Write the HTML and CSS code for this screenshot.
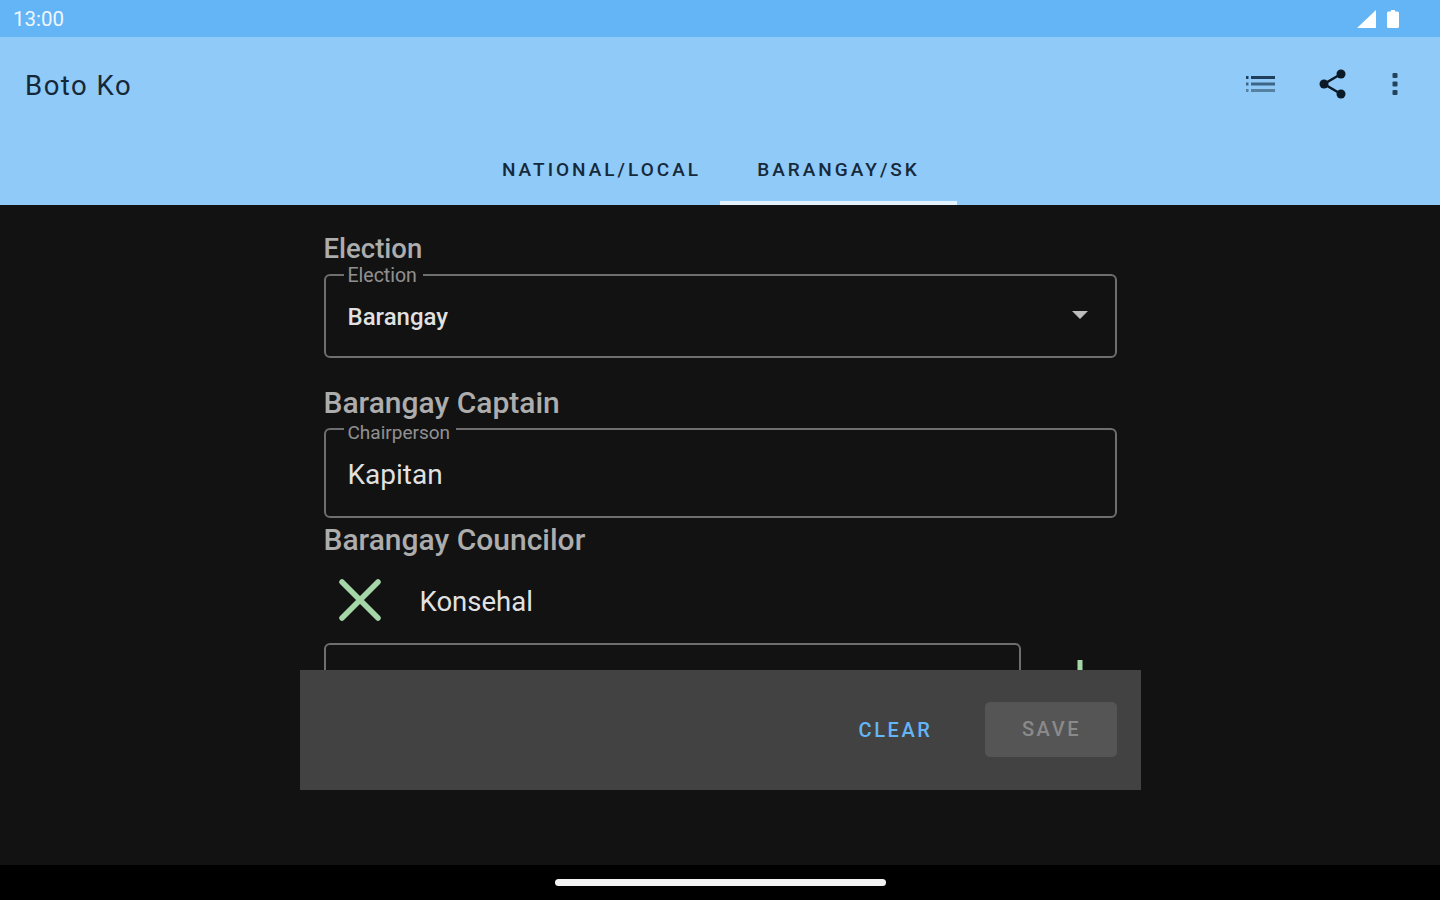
FILE: index.html
```html
<!DOCTYPE html>
<html lang="en">
<head>
    <meta charset="UTF-8">
    <meta name="viewport" content="width=device-width, initial-scale=1.0">
    <title>Boto Ko</title>
    <link rel="stylesheet" href="styles.css">
</head>
<body>
    <div class="screen">
        <div class="status-bar">
            <span class="clock">13:00</span>
            <div class="status-icons">
                <svg width="20" height="18" viewBox="0 0 20 18"><path d="M19 0V18H0Z" fill="#fff"/></svg>
                <svg width="12" height="18" viewBox="0 0 12 18"><path d="M4 0H8V1.500H10.500Q12 1.500 12 3V16.500Q12 18 10.500 18H1.500Q0 18 0 16.500V3Q0 1.500 1.500 1.500H4Z" fill="#fff"/></svg>
            </div>
        </div>

        <header class="app-bar">
            <div class="toolbar">
                <span class="app-title">Boto Ko</span>
                <div class="toolbar-actions">
                    <svg class="icon-list" width="30" height="18" viewBox="0 0 30 18">
                        <g fill="#1f3f5c">
                            <rect x="0" y="1" width="2.500" height="3"/>
                            <rect x="5" y="1" width="24" height="3"/>
                        </g>
                        <g fill="#3d6485">
                            <rect x="0" y="7.500" width="2.500" height="3"/>
                            <rect x="5" y="7.500" width="24" height="3"/>
                        </g>
                        <g fill="#56819f">
                            <rect x="0" y="14" width="2.500" height="3"/>
                            <rect x="5" y="14" width="24" height="3"/>
                        </g>
                    </svg>
                    <svg class="icon-share" width="28" height="30" viewBox="0 0 28 30">
                        <path d="M22 5L5 15L22 25" fill="none" stroke="#0c1a26" stroke-width="2.500"/>
                        <circle cx="22" cy="5" r="4.500" fill="#0c1a26"/>
                        <circle cx="5" cy="15" r="4.500" fill="#0c1a26"/>
                        <circle cx="22" cy="25" r="4.500" fill="#0c1a26"/>
                    </svg>
                    <svg class="icon-more" width="6" height="22" viewBox="0 0 6 22">
                        <g fill="#24425c">
                            <rect x="0.500" y="0" width="5" height="5" rx="1"/>
                            <rect x="0.500" y="8.500" width="5" height="5" rx="1"/>
                            <rect x="0.500" y="17" width="5" height="5" rx="1"/>
                        </g>
                    </svg>
                </div>
            </div>
            <nav class="tabs">
                <div class="tab">NATIONAL/LOCAL</div>
                <div class="tab active">BARANGAY/SK</div>
            </nav>
        </header>

        <main class="content">
            <div class="column">
                <div class="form-scroll">
                    <h2 class="section-title first">Election</h2>
                    <fieldset class="outlined select-field">
                        <legend>Election</legend>
                        <span class="field-value small">Barangay</span>
                        <span class="caret"></span>
                    </fieldset>

                    <h2 class="section-title captain">Barangay Captain</h2>
                    <fieldset class="outlined text-field">
                        <legend>Chairperson</legend>
                        <span class="field-value">Kapitan</span>
                    </fieldset>

                    <h2 class="section-title councilor">Barangay Councilor</h2>
                    <div class="candidate-row">
                        <svg width="44" height="44" viewBox="0 0 44 44">
                            <path d="M4 4L40 40M40 4L4 40" fill="none" stroke="#a5d6a7" stroke-width="5.500" stroke-linecap="round"/>
                        </svg>
                        <span class="candidate-name">Konsehal</span>
                    </div>

                    <div class="add-row">
                        <div class="add-input"></div>
                        <svg class="add-icon" width="40" height="40" viewBox="0 0 40 40">
                            <path d="M20 2V38M2 20H38" fill="none" stroke="#a5d6a7" stroke-width="5"/>
                        </svg>
                    </div>
                </div>

                <div class="action-bar">
                    <button class="btn-clear">CLEAR</button>
                    <button class="btn-save" disabled>SAVE</button>
                </div>
            </div>
        </main>

        <div class="nav-bar">
            <div class="home-pill"></div>
        </div>
    </div>
</body>
</html>
```

FILE: styles.css
```css
* {
    margin: 0;
    padding: 0;
    box-sizing: border-box;
}

body {
    font-family: Roboto, "Liberation Sans", sans-serif;
    background: #121212;
    overflow: hidden;
}

.screen {
    height: 100vh;
    display: flex;
    flex-direction: column;
}

.status-bar {
    height: 37px;
    flex: none;
    background: #64b5f6;
    display: flex;
    align-items: center;
    justify-content: space-between;
    padding: 0 41px 0 13px;
    color: #fff;
}

.clock {
    font-size: 20.500px;
    opacity: 0.9;
}

.status-icons {
    display: flex;
    gap: 10px;
    align-items: center;
}

.app-bar {
    height: 168px;
    flex: none;
    background: #90caf9;
    display: flex;
    flex-direction: column;
    justify-content: space-between;
}

.toolbar {
    height: 97px;
    display: flex;
    align-items: center;
    justify-content: space-between;
    padding: 0 42px 0 25px;
}

.app-title {
    font-size: 27.500px;
    letter-spacing: 1.500px;
    color: #152838;
}

.toolbar-actions {
    display: flex;
    align-items: center;
    margin-bottom: 3px;
}

.icon-list {
    margin-right: 43px;
}

.icon-share {
    margin-right: 45px;
}

.tabs {
    display: flex;
    justify-content: center;
    height: 68px;
}

.tab {
    width: 237px;
    display: flex;
    align-items: center;
    justify-content: center;
    font-size: 19px;
    font-weight: 500;
    letter-spacing: 3px;
    color: #16293a;
    border-bottom: 4px solid transparent;
}

.tab.active {
    border-bottom-color: #e3f2fd;
}

.content {
    flex: 1;
    min-height: 0;
    background: #121212;
}

.column {
    width: 841px;
    margin: 0 auto;
}

.form-scroll {
    height: 465px;
    overflow: hidden;
    padding: 0 24px;
}

.section-title {
    font-size: 30px;
    font-weight: 500;
    line-height: 32px;
    color: rgba(255, 255, 255, 0.66);
}

.section-title.first {
    font-size: 27.500px;
    margin-top: 28px;
}

.section-title.captain {
    margin-top: 29px;
}

.section-title.councilor {
    margin-top: 6px;
}

.outlined {
    position: relative;
    border: 2px solid #6e6e6e;
    border-radius: 6px;
    padding: 0 22px 4px;
    display: flex;
    align-items: center;
}

.outlined legend {
    margin-left: -4px;
    padding: 0 6px 0 4px;
    font-size: 19.500px;
    line-height: 14px;
    color: rgba(255, 255, 255, 0.55);
}

.select-field {
    height: 90px;
    margin-top: 3px;
}

.select-field legend {
    transform: translateY(1px);
}

.text-field {
    height: 96px;
    margin-top: 3px;
}

.text-field legend {
    font-size: 19px;
    transform: translateY(4px);
}

.field-value {
    font-size: 28px;
    color: rgba(255, 255, 255, 0.88);
}

.field-value.small {
    font-size: 24px;
    font-weight: 500;
}

.caret {
    position: absolute;
    right: 27px;
    top: 29px;
    border-left: 8px solid transparent;
    border-right: 8px solid transparent;
    border-top: 8px solid #bdbdbd;
}

.candidate-row {
    height: 87px;
    display: flex;
    align-items: center;
    gap: 38px;
    padding-left: 14px;
}

.candidate-name {
    font-size: 27.500px;
    padding-top: 4px;
    color: rgba(255, 255, 255, 0.9);
}

.add-row {
    display: flex;
}

.add-input {
    width: 697px;
    height: 90px;
    border: 2px solid #6e6e6e;
    border-radius: 6px;
}

.add-icon {
    margin: 15px 0 0 39px;
}

.action-bar {
    height: 120px;
    background: #424242;
    display: flex;
    align-items: center;
    justify-content: flex-end;
    padding-right: 24px;
    gap: 52px;
}

.action-bar button {
    font-family: inherit;
    font-size: 20px;
    font-weight: 500;
    letter-spacing: 2.600px;
    border: none;
    background: none;
}

.btn-clear {
    color: #64b5f6;
}

.action-bar .btn-save {
    width: 132px;
    height: 55px;
    margin-bottom: 2px;
    padding-left: 2px;
    border-radius: 5px;
    background: #555;
    color: #8a8a8a;
}

.nav-bar {
    height: 35px;
    flex: none;
    background: #000;
    display: flex;
    justify-content: center;
    padding-top: 14px;
}

.home-pill {
    width: 331px;
    height: 7px;
    border-radius: 4px;
    background: #f2f2f2;
}
```
